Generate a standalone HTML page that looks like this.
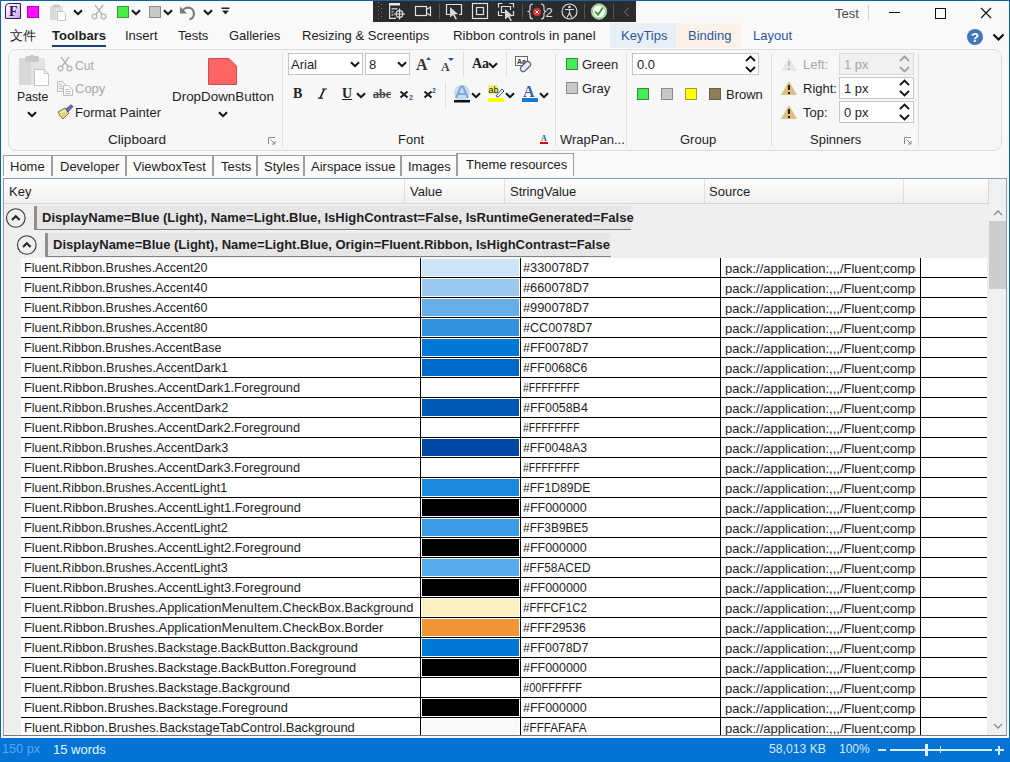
<!DOCTYPE html>
<html><head><meta charset="utf-8">
<style>
*{margin:0;padding:0;box-sizing:border-box}
html,body{width:1010px;height:762px;overflow:hidden;background:#f9f9fa;font-family:"Liberation Sans",sans-serif;font-size:13px;color:#1e1e1e}
.a{position:absolute}
.t{position:absolute;white-space:nowrap;line-height:13px;font-size:13px}
/* window border */
#wl{left:0;top:0;width:1px;height:762px;background:#1b5fa0}
#wr{left:1009px;top:0;width:1px;height:762px;background:#1b5fa0}
#wt{left:0;top:0;width:1010px;height:1px;background:#1b5fa0}
/* debug toolbar */
#dbg{left:373px;top:1px;width:263px;height:21px;background:#2b2b2b}
/* ribbon panel */
#rp{left:8px;top:49px;width:994px;height:102px;border:1px solid #dcdcdc;border-radius:8px;background:#f7f7f7}
.gsep{position:absolute;width:1px;background:#dedede}
.dis{color:#a6a6a6}
.cb{position:absolute;background:#fff;border:1px solid #c6c6c6}
.chev{position:absolute}
/* tabs */
.tab{position:absolute;top:155px;height:23px;border-top:1px solid #a0a0a0;border-right:2px solid #a0a0a0;background:#fafafa}
/* content */
#content{left:3px;top:178px;width:1004px;height:558px;border:1px solid #8c9fb2;border-bottom-color:#7a7a7a;background:#efefef}
#hdr{left:4px;top:179px;width:985px;height:25px;background:linear-gradient(#fdfdfd,#f0f0f0);border-bottom:1px solid #d5d5d5;border-right:1px solid #dadada}
.hsep{position:absolute;top:179px;width:1px;height:24px;background:#dfdfdf}
.row{position:absolute;left:21px;width:966px;height:20px;background:#fff;border-bottom:1px solid #000}
.row .kt{position:absolute;left:3px;top:4px;line-height:13px;white-space:nowrap;font-size:12.7px}
.row .vc{position:absolute;left:399px;top:0;width:101px;height:20px;border-left:1px solid #000;border-right:1px solid #000;padding:1px}
.row .sw{width:97px;height:17px}
.row .st{position:absolute;left:502px;top:4px;line-height:13px;white-space:nowrap;font-size:12px;transform-origin:0 0}
.row .sc{position:absolute;left:699px;top:0;width:1px;height:20px;background:#000}
.row .so{position:absolute;left:704px;top:4px;line-height:13px;white-space:nowrap;width:191px;overflow:hidden;top:3.5px}
.row .sc2{position:absolute;left:899px;top:0;width:1px;height:20px;background:#000}
#sb{left:989px;top:179px;width:17px;height:556px;background:#f0f0f0}
#thumb{left:989px;top:221px;width:17px;height:68px;background:#cdcdcd}
#status{left:0;top:738px;width:1010px;height:24px;background:#0374d6}
</style></head><body>
<div class="a" id="wt"></div><div class="a" id="wl"></div><div class="a" id="wr"></div>
<div class="a" style="left:1px;top:1px;width:1px;height:737px;background:#eaf8ff"></div>
<div class="a" style="left:1px;top:1px;width:1008px;height:1px;background:#eaf8ff"></div>
<div class="a" style="left:1008px;top:1px;width:1px;height:737px;background:#eaf8ff"></div>

<!-- ===== TITLE BAR ===== -->
<div class="a" style="left:5px;top:3px;width:16px;height:16px;border:1.5px solid #3c1466;border-radius:4px 0 0 0;background:linear-gradient(135deg,#fff 10%,#c4a4e4)"></div>
<div class="t" style="left:9px;top:5px;font-family:'Liberation Serif',serif;font-weight:bold;font-size:14px;color:#3a0a6a">F</div>
<div class="a" style="left:27px;top:6px;width:12px;height:12px;background:#ff10ff;border:1px solid #c000c0"></div>
<svg class="a" style="left:49px;top:3px" width="18" height="18" viewBox="0 0 18 18">
 <rect x="1" y="3" width="13" height="14" fill="#e3e3e3"/>
 <rect x="1" y="3" width="6" height="14" fill="#d9d9d9"/>
 <rect x="4" y="1.5" width="7" height="3" rx="1" fill="#c8c8c8"/>
 <path d="M8.5 8.5 H14 L16.5 11 V17.5 H8.5 Z" fill="#fff" stroke="#c4c4c4" stroke-width="1"/>
</svg>
<svg class="a" style="left:73px;top:9px" width="10" height="7" viewBox="0 0 10 7"><path d="M1 1.2 L5 5.2 L9 1.2" fill="none" stroke="#111" stroke-width="2"/></svg>
<svg class="a" style="left:91px;top:4px" width="16" height="16" viewBox="0 0 16 16">
 <path d="M4 1 L11.5 11 M12 1 L4.5 11" stroke="#b4b4b4" stroke-width="1.3" fill="none"/>
 <circle cx="3.5" cy="12.5" r="2.4" fill="none" stroke="#b4b4b4" stroke-width="1.2"/>
 <circle cx="12.5" cy="12.5" r="2.4" fill="none" stroke="#b4b4b4" stroke-width="1.2"/>
</svg>
<div class="a" style="left:117px;top:6px;width:12px;height:12px;background:#44f044;border:1px solid #3a9a3a"></div>
<div class="a" style="left:149px;top:6px;width:12px;height:12px;background:#c8c8c8;border:1px solid #8a8a8a"></div>
<svg class="a" style="left:131px;top:9px" width="10" height="7" viewBox="0 0 10 7"><path d="M1 1.2 L5 5.2 L9 1.2" fill="none" stroke="#111" stroke-width="2"/></svg>
<svg class="a" style="left:163px;top:9px" width="10" height="7" viewBox="0 0 10 7"><path d="M1 1.2 L5 5.2 L9 1.2" fill="none" stroke="#111" stroke-width="2"/></svg>
<svg class="a" style="left:179px;top:3px" width="18" height="18" viewBox="0 0 18 18">
 <path d="M3 10 A6 6 0 1 1 10.5 16.5" fill="none" stroke="#7a7a7a" stroke-width="2.2"/>
 <path d="M1 3.5 V10.5 H8 Z" fill="#7a7a7a"/>
</svg>
<svg class="a" style="left:203px;top:9px" width="10" height="7" viewBox="0 0 10 7"><path d="M1 1.2 L5 5.2 L9 1.2" fill="none" stroke="#111" stroke-width="2"/></svg>
<svg class="a" style="left:221px;top:7px" width="9" height="8" viewBox="0 0 9 8"><rect x="0.5" y="0.5" width="8" height="1.5" fill="#222"/><path d="M1 3.5 H8 L4.5 7.5 Z" fill="#222"/></svg>

<div class="a" id="dbg"></div>
<svg class="a" style="left:373px;top:1px" width="263" height="21" viewBox="0 0 263 21">
 <g fill="#777"><rect x="5" y="1" width="1" height="1"/><rect x="8" y="3" width="1" height="1"/><rect x="5" y="5" width="1" height="1"/><rect x="8" y="7" width="1" height="1"/><rect x="5" y="9" width="1" height="1"/><rect x="8" y="11" width="1" height="1"/><rect x="5" y="13" width="1" height="1"/><rect x="8" y="15" width="1" height="1"/><rect x="5" y="17" width="1" height="1"/></g>
 <rect x="16" y="2" width="11" height="2.5" fill="#e8e8e8"/>
 <g fill="none" stroke="#e0e0e0" stroke-width="1.2">
  <path d="M16.6 2 V17.4 H23"/><path d="M18.5 7.8 H24.5 M18.5 10.8 H20.5 M18.5 13.8 H20.5"/>
  <circle cx="26.5" cy="13" r="3.3"/><path d="M26.5 7.5 V18.5 M21 13 H32"/>
  <rect x="42.5" y="5.5" width="11" height="9"/><path d="M53.5 8.5 L57.5 6 V14.5 L53.5 12"/>
 </g>
 <rect x="66" y="3" width="1" height="15" fill="#555"/>
 <g fill="none" stroke="#e0e0e0" stroke-width="1.2">
  <path d="M77 13.5 H73.5 V3.5 H88.5 V13.5 H86"/>
  <rect x="99.5" y="2.5" width="15" height="15"/><rect x="103.5" y="6.5" width="7" height="7"/>
  <path d="M125.5 6.5 V2.5 H129.5 M136.5 2.5 H140.5 V6.5 M140.5 10 V14.5 H138 M125.5 10 V14.5 H129.5"/><path d="M132 11.5 H128.5 V5.5 H137.5 V9"/>
 </g>
 <path d="M77 6 L85 13 L81.5 13.5 L84 18 L82.5 18.5 L80 14 L77 16.5Z" fill="#d8d8d8"/>
 <path d="M132 8 L140 15 L136.5 15.5 L139 19.5 L137.5 20 L135 16 L132 18.5Z" fill="#d8d8d8"/>
 <rect x="149" y="3" width="1" height="15" fill="#555"/>
 <path d="M160 3 Q157 3 157 6 V8.5 Q157 10 155.5 10.5 Q157 11 157 12.5 V15 Q157 18 160 18 M168 3 Q171 3 171 6 V8.5 Q171 10 172.5 10.5 Q171 11 171 12.5 V15 Q171 18 168 18" fill="none" stroke="#e0e0e0" stroke-width="1.1"/>
 <circle cx="164" cy="11" r="4" fill="#e03030"/><path d="M162.3 9.3 L165.7 12.7 M165.7 9.3 L162.3 12.7" stroke="#fff" stroke-width="1"/>
 <text x="172.5" y="15.5" font-family="Liberation Sans" font-size="13" fill="#e0e0e0">2</text>
 <circle cx="196.5" cy="10.5" r="7.5" fill="none" stroke="#e0e0e0" stroke-width="1.1"/>
 <circle cx="196.5" cy="6" r="1.3" fill="#e0e0e0"/>
 <path d="M192 8.5 H201 M196.5 8.5 V12 L194 16.5 M196.5 12 L199 16.5" fill="none" stroke="#e0e0e0" stroke-width="1.1"/>
 <rect x="211" y="3" width="1" height="15" fill="#555"/>
 <circle cx="226" cy="10.5" r="7.8" fill="#ffffff" stroke="#7ab87a" stroke-width="1"/>
 <circle cx="226" cy="10.5" r="6.5" fill="none" stroke="#2e9a2e" stroke-width="0.6"/>
 <path d="M222 10.5 L225 13.8 L230 6.5" fill="none" stroke="#22a022" stroke-width="1.8"/>
 <rect x="240" y="3" width="1" height="15" fill="#555"/>
 <path d="M256 6.5 L251.5 11 L256 15.5" fill="none" stroke="#777" stroke-width="1"/>
</svg>

<div class="t" style="left:835px;top:7px;color:#4a4a4a">Test</div>
<div class="a" style="left:868px;top:5px;width:1px;height:15px;background:#d0d0d0"></div>
<div class="a" style="left:889px;top:12px;width:11px;height:1px;background:#111"></div>
<div class="a" style="left:935px;top:8px;width:11px;height:11px;border:1px solid #111"></div>
<svg class="a" style="left:980px;top:7px" width="12" height="12" viewBox="0 0 12 12"><path d="M1 1 L11 11 M11 1 L1 11" stroke="#111" stroke-width="1.1"/></svg>
<svg class="a" style="left:992px;top:33px" width="13" height="8" viewBox="0 0 13 8"><path d="M1.5 1.5 L6.5 6.5 L11.5 1.5" fill="none" stroke="#111" stroke-width="2.2"/></svg>

<!-- ===== RIBBON TABS ===== -->
<div class="a" style="left:610px;top:23px;width:66px;height:25px;background:#e8eff7"></div>
<div class="a" style="left:676px;top:23px;width:65px;height:25px;background:#fbf3e9"></div>
<div class="t" style="left:10px;top:29px">文件</div>
<div class="t" style="left:52px;top:29px;font-weight:bold">Toolbars</div>
<div class="a" style="left:52px;top:45px;width:54px;height:2px;background:#1e3f7a"></div>
<div class="t" style="left:125px;top:29px">Insert</div>
<div class="t" style="left:178px;top:29px">Tests</div>
<div class="t" style="left:229px;top:29px">Galleries</div>
<div class="t" style="left:302px;top:29px">Resizing &amp; Screentips</div>
<div class="t" style="left:453px;top:29px;font-size:13.3px">Ribbon controls in panel</div>
<div class="t" style="left:621px;top:29px;color:#2b579a">KeyTips</div>
<div class="t" style="left:688px;top:29px;color:#2b579a">Binding</div>
<div class="t" style="left:753px;top:29px;color:#2b579a">Layout</div>
<div class="a" style="left:967px;top:29px;width:16px;height:16px;border-radius:50%;background:#3f78b8"></div>
<div class="t" style="left:971px;top:31px;color:#fff;font-weight:bold;font-size:13px">?</div>

<!-- ===== RIBBON PANEL ===== -->
<div class="a" id="rp"></div>

<!-- Clipboard -->
<svg class="a" style="left:17px;top:54px" width="34" height="34" viewBox="0 0 34 34">
 <rect x="2" y="4" width="26" height="27" fill="#e3e3e3"/>
 <rect x="2" y="4" width="12" height="27" fill="#d9d9d9"/>
 <rect x="8" y="2" width="14" height="6" rx="1.5" fill="#c8c8c8"/>
 <circle cx="15" cy="2.5" r="2" fill="#c8c8c8"/>
 <path d="M17.5 15.5 H27.5 L31.5 19.5 V31.5 H17.5 Z" fill="#fff" stroke="#c4c4c4" stroke-width="1"/>
 <path d="M27.5 15.5 V19.5 H31.5" fill="none" stroke="#c4c4c4" stroke-width="1"/>
</svg>
<div class="t" style="left:17px;top:91px;font-size:12.2px">Paste</div>
<svg class="a" style="left:27px;top:111px" width="10" height="7" viewBox="0 0 10 7"><path d="M1 1.2 L5 5.2 L9 1.2" fill="none" stroke="#111" stroke-width="2"/></svg>

<svg class="a" style="left:57px;top:56px" width="16" height="16" viewBox="0 0 16 16">
 <path d="M4 1 L11.5 11 M12 1 L4.5 11" stroke="#b4b4b4" stroke-width="1.3" fill="none"/>
 <circle cx="3.5" cy="12.5" r="2.4" fill="none" stroke="#b4b4b4" stroke-width="1.2"/>
 <circle cx="12.5" cy="12.5" r="2.4" fill="none" stroke="#b4b4b4" stroke-width="1.2"/>
</svg>
<div class="t dis" style="left:75px;top:60px;font-size:12.2px">Cut</div>
<svg class="a" style="left:57px;top:81px" width="16" height="15" viewBox="0 0 16 15">
 <path d="M0.5 0.5 H5.5 L8.5 3.5 V10.5 H0.5 Z" fill="#f2f2f2" stroke="#bdbdbd"/>
 <path d="M6.5 4.5 H11.5 L15.5 8.5 V14.5 H6.5 Z" fill="#fafafa" stroke="#bdbdbd"/>
 <path d="M2 3.5 H5 M2 5.5 H6 M2 7.5 H6 M8 8.5 H13 M8 10.5 H14 M8 12.5 H14" stroke="#c4c4c4"/>
</svg>
<div class="t dis" style="left:75px;top:82px">Copy</div>
<svg class="a" style="left:57px;top:104px" width="17" height="16" viewBox="0 0 17 16">
 <path d="M1 8 L8 4 L12 9 L6 15 Q3 13 1 8 Z" fill="#e6d27a" stroke="#6b5a20" stroke-width="0.8"/>
 <path d="M3 9 L9 6" stroke="#f7ecb0" stroke-width="1.5"/>
 <path d="M9 5 L14 0.8 L16 2.5 L11 8 Z" fill="#6a6fc0" stroke="#3a3f80" stroke-width="0.8"/>
</svg>
<div class="t" style="left:75px;top:106px">Format Painter</div>
<div class="t" style="left:108px;top:133px;font-size:13.6px">Clipboard</div>

<svg class="a" style="left:208px;top:58px" width="29" height="27" viewBox="0 0 29 27">
 <path d="M0.5 0.5 H21 L28.5 8 V26.5 H0.5 Z" fill="#ff6464" stroke="#c85050" stroke-width="1"/>
</svg>
<div class="t" style="left:172px;top:90px;font-size:13.4px">DropDownButton</div>
<svg class="a" style="left:218px;top:111px" width="10" height="7" viewBox="0 0 10 7"><path d="M1 1.2 L5 5.2 L9 1.2" fill="none" stroke="#111" stroke-width="2"/></svg>
<svg class="a" style="left:268px;top:137px" width="8" height="8" viewBox="0 0 8 8"><path d="M0.5 7 V0.5 H7 M2.5 2.5 L7 7 M7 4 V7 H4" fill="none" stroke="#8a8a8a" stroke-width="1"/></svg>
<div class="gsep" style="left:282px;top:54px;height:92px"></div>

<!-- Font -->
<div class="cb" style="left:288px;top:53px;width:75px;height:22px"></div>
<div class="t" style="left:291px;top:58px">Arial</div>
<svg class="a" style="left:350px;top:61px" width="10" height="7" viewBox="0 0 10 7"><path d="M1 1.2 L5 5.2 L9 1.2" fill="none" stroke="#111" stroke-width="2"/></svg>
<div class="cb" style="left:365px;top:53px;width:45px;height:22px"></div>
<div class="t" style="left:369px;top:58px">8</div>
<svg class="a" style="left:397px;top:61px" width="10" height="7" viewBox="0 0 10 7"><path d="M1 1.2 L5 5.2 L9 1.2" fill="none" stroke="#111" stroke-width="2"/></svg>

<div class="t" style="left:416px;top:57px;font-family:'Liberation Serif',serif;font-weight:bold;font-size:16px;line-height:16px;color:#333">A</div>
<svg class="a" style="left:426px;top:56.5px" width="5" height="3"><path d="M0 3 L2.5 0 L5 3Z" fill="#2b579a"/></svg>
<div class="t" style="left:441px;top:61px;font-family:'Liberation Serif',serif;font-weight:bold;font-size:12px;line-height:12px;color:#444">A</div>
<svg class="a" style="left:447.5px;top:58px" width="6" height="3"><path d="M0 0 L3 3 L6 0Z" fill="#2b579a"/></svg>
<div class="gsep" style="left:463px;top:52px;height:25px"></div>
<div class="t" style="left:472px;top:57px;font-family:'Liberation Serif',serif;font-weight:bold;font-size:14px;line-height:14px;color:#222">Aa</div>
<svg class="a" style="left:488px;top:62px" width="10" height="7" viewBox="0 0 10 7"><path d="M1 1.2 L5 5.2 L9 1.2" fill="none" stroke="#111" stroke-width="2"/></svg>
<div class="gsep" style="left:506px;top:52px;height:25px"></div>
<svg class="a" style="left:514px;top:55px" width="18" height="18" viewBox="0 0 18 18">
 <rect x="1.5" y="1.5" width="12" height="9" fill="#fff" stroke="#666" stroke-width="1"/>
 <text x="3" y="8.8" font-family="Liberation Sans" font-weight="bold" font-size="7" fill="#333">Aa</text>
 <path d="M7 12 L12 7 Q14 5.5 16 7.5 Q17.5 9.5 16 11 L11 16 Q9 17.5 7.5 16 Q5.5 14 7 12Z" fill="#e6ecf4" stroke="#4a5a78" stroke-width="1.1"/>
</svg>

<div class="t" style="left:293px;top:87px;font-family:'Liberation Serif',serif;font-weight:bold;font-size:14px;line-height:14px;color:#222">B</div>
<svg class="a" style="left:316px;top:87px" width="13" height="13" viewBox="0 0 13 13"><path d="M8.3 2.2 L4.2 11" stroke="#222" stroke-width="1.6"/><path d="M6 2 H11 M2 11.2 H7" stroke="#222" stroke-width="1.2"/></svg>
<div class="t" style="left:342px;top:87px;font-family:'Liberation Serif',serif;font-weight:bold;font-size:14px;line-height:14px;color:#222;text-decoration:underline">U</div>
<svg class="a" style="left:356px;top:92px" width="10" height="7" viewBox="0 0 10 7"><path d="M1 1.2 L5 5.2 L9 1.2" fill="none" stroke="#111" stroke-width="2"/></svg>
<div class="t" style="left:373px;top:88px;font-family:'Liberation Serif',serif;font-weight:bold;font-size:12px;line-height:12px;color:#444;text-decoration:line-through">abc</div>
<svg class="a" style="left:399px;top:90px" width="10" height="9" viewBox="0 0 10 9"><path d="M1.5 1.5 L8.5 7.5 M8.5 1.5 L1.5 7.5" stroke="#222" stroke-width="2.2"/></svg>
<div class="t" style="left:409px;top:94px;font-weight:bold;font-size:7px;line-height:7px;color:#2b579a">2</div>
<svg class="a" style="left:423px;top:90px" width="10" height="9" viewBox="0 0 10 9"><path d="M1.5 1.5 L8.5 7.5 M8.5 1.5 L1.5 7.5" stroke="#222" stroke-width="2.2"/></svg>
<div class="t" style="left:432px;top:87px;font-weight:bold;font-size:7px;line-height:7px;color:#2b579a">2</div>
<div class="gsep" style="left:445px;top:82px;height:26px"></div>
<svg class="a" style="left:453px;top:85px" width="18" height="18" viewBox="0 0 18 18">
 <circle cx="9" cy="8" r="8" fill="#bcd6f0" opacity="0.8"/>
 <path d="M3 13 L8 1.5 H10 L15 13 M5.2 9 H12.8" fill="none" stroke="#7aa7d8" stroke-width="2"/>
 <rect x="1" y="15" width="16" height="2.5" fill="#111"/>
</svg>
<svg class="a" style="left:471px;top:92px" width="10" height="7" viewBox="0 0 10 7"><path d="M1 1.2 L5 5.2 L9 1.2" fill="none" stroke="#111" stroke-width="2"/></svg>
<svg class="a" style="left:488px;top:85px" width="17" height="18" viewBox="0 0 17 18">
 <rect x="0" y="0" width="10" height="9" fill="#f0f070"/>
 <text x="0.5" y="8" font-family="Liberation Sans" font-size="9" fill="#222">ab</text>
 <path d="M8 11 L14 4 L16 6 L10 12 Z" fill="#fff" stroke="#2b579a" stroke-width="1"/>
 <rect x="0" y="13" width="16" height="4" fill="#ffff00"/>
</svg>
<svg class="a" style="left:505px;top:92px" width="10" height="7" viewBox="0 0 10 7"><path d="M1 1.2 L5 5.2 L9 1.2" fill="none" stroke="#111" stroke-width="2"/></svg>
<div class="t" style="left:523px;top:84px;font-family:'Liberation Serif',serif;font-weight:bold;font-size:16px;line-height:16px;color:#3a5fa8">A</div>
<div class="a" style="left:522px;top:98px;width:16px;height:4px;background:#1976d2"></div>
<svg class="a" style="left:539px;top:92px" width="10" height="7" viewBox="0 0 10 7"><path d="M1 1.2 L5 5.2 L9 1.2" fill="none" stroke="#111" stroke-width="2"/></svg>
<div class="t" style="left:398px;top:133px">Font</div>
<div class="t" style="left:541px;top:135px;font-family:'Liberation Serif',serif;font-weight:bold;font-size:8px;line-height:8px;color:#2b579a">A</div>
<div class="a" style="left:540px;top:142px;width:8px;height:2px;background:#e00"></div>
<div class="gsep" style="left:555px;top:54px;height:92px"></div>

<!-- WrapPanel -->
<div class="a" style="left:566px;top:58px;width:12px;height:12px;background:#44ee55;border:1px solid #3a8a3a"></div>
<div class="t" style="left:582px;top:58px">Green</div>
<div class="a" style="left:566px;top:82px;width:12px;height:12px;background:#c8c8c8;border:1px solid #8a8a8a"></div>
<div class="t" style="left:582px;top:82px">Gray</div>
<div class="t" style="left:560px;top:133px">WrapPan...</div>
<div class="gsep" style="left:626px;top:54px;height:92px"></div>

<!-- Group -->
<div class="cb" style="left:632px;top:53px;width:127px;height:22px"></div>
<div class="t" style="left:637px;top:58px">0.0</div>
<svg class="a" style="left:745px;top:55px" width="11" height="18" viewBox="0 0 11 18"><path d="M1 6 L5.5 1.5 L10 6 M1 12 L5.5 16.5 L10 12" fill="none" stroke="#111" stroke-width="1.8"/></svg>
<div class="a" style="left:637px;top:88px;width:12px;height:12px;background:#44ee55;border:1px solid #3a8a3a"></div>
<div class="a" style="left:661px;top:88px;width:12px;height:12px;background:#c8c8c8;border:1px solid #8a8a8a"></div>
<div class="a" style="left:685px;top:88px;width:12px;height:12px;background:#ffff00;border:1px solid #a0a030"></div>
<div class="a" style="left:709px;top:88px;width:12px;height:12px;background:#8c7e5a;border:1px solid #6a6040"></div>
<div class="t" style="left:726px;top:88px">Brown</div>
<div class="t" style="left:680px;top:133px">Group</div>
<div class="gsep" style="left:771px;top:54px;height:92px"></div>

<!-- Spinners -->
<svg class="a" style="left:780px;top:56px" width="18" height="16" viewBox="0 0 18 16"><path d="M9 1 L17 15 H1 Z" fill="#e8e8e8"/><path d="M9 5 V10 M9 12 V14" stroke="#bbb" stroke-width="2"/></svg>
<div class="t dis" style="left:803px;top:58px">Left:</div>
<div class="a" style="left:839px;top:53px;width:75px;height:22px;background:#f0f0f0;border:1px solid #dadada"></div>
<div class="t dis" style="left:844px;top:58px">1 px</div>
<svg class="a" style="left:899px;top:55px" width="11" height="18" viewBox="0 0 11 18"><path d="M1 6 L5.5 1.5 L10 6 M1 12 L5.5 16.5 L10 12" fill="none" stroke="#a0a0a0" stroke-width="1.8"/></svg>

<svg class="a" style="left:780px;top:80px" width="18" height="16" viewBox="0 0 18 16"><path d="M9 1 L17 15 H1 Z" fill="#e0bf80"/><path d="M9 5 V10 M9 12 V14" stroke="#222" stroke-width="2"/></svg>
<div class="t" style="left:803px;top:82px">Right:</div>
<div class="cb" style="left:839px;top:77px;width:75px;height:22px"></div>
<div class="t" style="left:844px;top:82px">1 px</div>
<svg class="a" style="left:899px;top:79px" width="11" height="18" viewBox="0 0 11 18"><path d="M1 6 L5.5 1.5 L10 6 M1 12 L5.5 16.5 L10 12" fill="none" stroke="#111" stroke-width="1.8"/></svg>

<svg class="a" style="left:780px;top:104px" width="18" height="16" viewBox="0 0 18 16"><path d="M9 1 L17 15 H1 Z" fill="#e0bf80"/><path d="M9 5 V10 M9 12 V14" stroke="#222" stroke-width="2"/></svg>
<div class="t" style="left:803px;top:106px">Top:</div>
<div class="cb" style="left:839px;top:101px;width:75px;height:22px"></div>
<div class="t" style="left:844px;top:106px">0 px</div>
<svg class="a" style="left:899px;top:103px" width="11" height="18" viewBox="0 0 11 18"><path d="M1 6 L5.5 1.5 L10 6 M1 12 L5.5 16.5 L10 12" fill="none" stroke="#111" stroke-width="1.8"/></svg>
<div class="t" style="left:810px;top:133px">Spinners</div>
<svg class="a" style="left:904px;top:137px" width="8" height="8" viewBox="0 0 8 8"><path d="M0.5 7 V0.5 H7 M2.5 2.5 L7 7 M7 4 V7 H4" fill="none" stroke="#8a8a8a" stroke-width="1"/></svg>
<div class="gsep" style="left:918px;top:54px;height:92px"></div>

<!-- ===== TAB CONTROL ===== -->
<div class="a" id="content"></div>
<div class="a" style="left:3px;top:155px;width:454px;height:21px;background:#fbfbfb;border-top:1px solid #a0a0a0;border-left:1px solid #a0a0a0"></div>
<div class="a" style="left:51px;top:155px;width:2px;height:21px;background:#a0a0a0"></div>
<div class="a" style="left:125px;top:155px;width:2px;height:21px;background:#a0a0a0"></div>
<div class="a" style="left:212px;top:155px;width:2px;height:21px;background:#a0a0a0"></div>
<div class="a" style="left:256px;top:155px;width:2px;height:21px;background:#a0a0a0"></div>
<div class="a" style="left:303px;top:155px;width:2px;height:21px;background:#a0a0a0"></div>
<div class="a" style="left:400px;top:155px;width:2px;height:21px;background:#a0a0a0"></div>
<div class="a" style="left:456px;top:153px;width:118px;height:23px;background:#fbfbfb;border:1px solid #a0a0a0;border-bottom:none;border-left-width:2px"></div>
<div class="t" style="left:10px;top:160px">Home</div>
<div class="t" style="left:60px;top:160px">Developer</div>
<div class="t" style="left:133px;top:160px">ViewboxTest</div>
<div class="t" style="left:221px;top:160px">Tests</div>
<div class="t" style="left:264px;top:160px">Styles</div>
<div class="t" style="left:311px;top:160px">Airspace issue</div>
<div class="t" style="left:408px;top:160px">Images</div>
<div class="t" style="left:466px;top:158px">Theme resources</div>

<!-- ===== DATA GRID ===== -->
<div class="a" id="hdr"></div>
<div class="hsep" style="left:404px"></div>
<div class="hsep" style="left:504px"></div>
<div class="hsep" style="left:704px"></div>
<div class="hsep" style="left:903px"></div>
<div class="t" style="left:9px;top:185px">Key</div>
<div class="t" style="left:410px;top:185px">Value</div>
<div class="t" style="left:510px;top:185px">StringValue</div>
<div class="t" style="left:709px;top:185px">Source</div>

<!-- groups -->
<svg class="a" style="left:5px;top:208px" width="22" height="22" viewBox="0 0 22 22"><circle cx="10.8" cy="10" r="9.3" fill="none" stroke="#333" stroke-width="1.1"/><path d="M7 12 L10.8 8.2 L14.6 12" fill="none" stroke="#222" stroke-width="2"/></svg>
<div class="a" style="left:34px;top:206px;width:597px;height:24px;background:#e6e6e6;border-left:3px solid #909090;border-bottom:1px solid #808080"></div>
<div class="t" style="left:42px;top:211px;font-weight:bold">DisplayName=Blue (Light), Name=Light.Blue, IsHighContrast=False, IsRuntimeGenerated=False</div>
<svg class="a" style="left:16px;top:235px" width="22" height="22" viewBox="0 0 22 22"><circle cx="10.8" cy="10" r="9.3" fill="none" stroke="#333" stroke-width="1.1"/><path d="M7 12 L10.8 8.2 L14.6 12" fill="none" stroke="#222" stroke-width="2"/></svg>
<div class="a" style="left:45px;top:233px;width:566px;height:24px;background:#e6e6e6;border-left:3px solid #909090;border-bottom:1px solid #808080"></div>
<div class="t" style="left:53px;top:238px;font-weight:bold">DisplayName=Blue (Light), Name=Light.Blue, Origin=Fluent.Ribbon, IsHighContrast=False</div>

<div class="a" style="left:0;top:0;width:1006px;height:735px;overflow:hidden">
<div class="row" style="top:258px"><span class="kt" style="font-size:12.56px;top:4px">Fluent.Ribbon.Brushes.Accent20</span><div class="vc"><div class="sw" style="background:rgb(204,228,247)"></div></div><span class="st" style="transform:scaleX(1.064)">#330078D7</span><div class="sc"></div><span class="so">pack://application:,,,/Fluent;component/Themes</span><div class="sc2"></div></div>
<div class="row" style="top:278px"><span class="kt" style="font-size:12.56px;top:4px">Fluent.Ribbon.Brushes.Accent40</span><div class="vc"><div class="sw" style="background:rgb(153,201,239)"></div></div><span class="st" style="transform:scaleX(1.064)">#660078D7</span><div class="sc"></div><span class="so">pack://application:,,,/Fluent;component/Themes</span><div class="sc2"></div></div>
<div class="row" style="top:298px"><span class="kt" style="font-size:12.56px;top:4px">Fluent.Ribbon.Brushes.Accent60</span><div class="vc"><div class="sw" style="background:rgb(102,174,231)"></div></div><span class="st" style="transform:scaleX(1.064)">#990078D7</span><div class="sc"></div><span class="so">pack://application:,,,/Fluent;component/Themes</span><div class="sc2"></div></div>
<div class="row" style="top:318px"><span class="kt" style="font-size:12.56px;top:4px">Fluent.Ribbon.Brushes.Accent80</span><div class="vc"><div class="sw" style="background:rgb(51,147,223)"></div></div><span class="st" style="transform:scaleX(1.048)">#CC0078D7</span><div class="sc"></div><span class="so">pack://application:,,,/Fluent;component/Themes</span><div class="sc2"></div></div>
<div class="row" style="top:338px"><span class="kt" style="font-size:12.5px;top:4px">Fluent.Ribbon.Brushes.AccentBase</span><div class="vc"><div class="sw" style="background:rgb(0,120,215)"></div></div><span class="st" style="transform:scaleX(1.031)">#FF0078D7</span><div class="sc"></div><span class="so">pack://application:,,,/Fluent;component/Themes</span><div class="sc2"></div></div>
<div class="row" style="top:358px"><span class="kt" style="font-size:12.61px;top:4px">Fluent.Ribbon.Brushes.AccentDark1</span><div class="vc"><div class="sw" style="background:rgb(0,104,198)"></div></div><span class="st" style="transform:scaleX(1.016)">#FF0068C6</span><div class="sc"></div><span class="so">pack://application:,,,/Fluent;component/Themes</span><div class="sc2"></div></div>
<div class="row" style="top:378px"><span class="kt" style="font-size:12.77px;top:3px">Fluent.Ribbon.Brushes.AccentDark1.Foreground</span><div class="vc"><div class="sw" style="background:rgb(255,255,255)"></div></div><span class="st" style="transform:scaleX(0.866)">#FFFFFFFF</span><div class="sc"></div><span class="so">pack://application:,,,/Fluent;component/Themes</span><div class="sc2"></div></div>
<div class="row" style="top:398px"><span class="kt" style="font-size:12.64px;top:4px">Fluent.Ribbon.Brushes.AccentDark2</span><div class="vc"><div class="sw" style="background:rgb(0,88,180)"></div></div><span class="st" style="transform:scaleX(1.033)">#FF0058B4</span><div class="sc"></div><span class="so">pack://application:,,,/Fluent;component/Themes</span><div class="sc2"></div></div>
<div class="row" style="top:418px"><span class="kt" style="font-size:12.77px;top:3px">Fluent.Ribbon.Brushes.AccentDark2.Foreground</span><div class="vc"><div class="sw" style="background:rgb(255,255,255)"></div></div><span class="st" style="transform:scaleX(0.866)">#FFFFFFFF</span><div class="sc"></div><span class="so">pack://application:,,,/Fluent;component/Themes</span><div class="sc2"></div></div>
<div class="row" style="top:438px"><span class="kt" style="font-size:12.64px;top:4px">Fluent.Ribbon.Brushes.AccentDark3</span><div class="vc"><div class="sw" style="background:rgb(0,72,163)"></div></div><span class="st" style="transform:scaleX(1.021)">#FF0048A3</span><div class="sc"></div><span class="so">pack://application:,,,/Fluent;component/Themes</span><div class="sc2"></div></div>
<div class="row" style="top:458px"><span class="kt" style="font-size:12.77px;top:3px">Fluent.Ribbon.Brushes.AccentDark3.Foreground</span><div class="vc"><div class="sw" style="background:rgb(255,255,255)"></div></div><span class="st" style="transform:scaleX(0.866)">#FFFFFFFF</span><div class="sc"></div><span class="so">pack://application:,,,/Fluent;component/Themes</span><div class="sc2"></div></div>
<div class="row" style="top:478px"><span class="kt" style="font-size:12.53px;top:4px">Fluent.Ribbon.Brushes.AccentLight1</span><div class="vc"><div class="sw" style="background:rgb(29,137,222)"></div></div><span class="st" style="transform:scaleX(1.008)">#FF1D89DE</span><div class="sc"></div><span class="so">pack://application:,,,/Fluent;component/Themes</span><div class="sc2"></div></div>
<div class="row" style="top:498px"><span class="kt" style="font-size:12.77px;top:3px">Fluent.Ribbon.Brushes.AccentLight1.Foreground</span><div class="vc"><div class="sw" style="background:rgb(0,0,0)"></div></div><span class="st" style="transform:scaleX(1.038)">#FF000000</span><div class="sc"></div><span class="so">pack://application:,,,/Fluent;component/Themes</span><div class="sc2"></div></div>
<div class="row" style="top:518px"><span class="kt" style="font-size:12.55px;top:4px">Fluent.Ribbon.Brushes.AccentLight2</span><div class="vc"><div class="sw" style="background:rgb(59,155,229)"></div></div><span class="st" style="transform:scaleX(0.998)">#FF3B9BE5</span><div class="sc"></div><span class="so">pack://application:,,,/Fluent;component/Themes</span><div class="sc2"></div></div>
<div class="row" style="top:538px"><span class="kt" style="font-size:12.77px;top:3px">Fluent.Ribbon.Brushes.AccentLight2.Foreground</span><div class="vc"><div class="sw" style="background:rgb(0,0,0)"></div></div><span class="st" style="transform:scaleX(1.038)">#FF000000</span><div class="sc"></div><span class="so">pack://application:,,,/Fluent;component/Themes</span><div class="sc2"></div></div>
<div class="row" style="top:558px"><span class="kt" style="font-size:12.55px;top:4px">Fluent.Ribbon.Brushes.AccentLight3</span><div class="vc"><div class="sw" style="background:rgb(88,172,237)"></div></div><span class="st" style="transform:scaleX(0.992)">#FF58ACED</span><div class="sc"></div><span class="so">pack://application:,,,/Fluent;component/Themes</span><div class="sc2"></div></div>
<div class="row" style="top:578px"><span class="kt" style="font-size:12.77px;top:3px">Fluent.Ribbon.Brushes.AccentLight3.Foreground</span><div class="vc"><div class="sw" style="background:rgb(0,0,0)"></div></div><span class="st" style="transform:scaleX(1.038)">#FF000000</span><div class="sc"></div><span class="so">pack://application:,,,/Fluent;component/Themes</span><div class="sc2"></div></div>
<div class="row" style="top:598px"><span class="kt" style="font-size:12.89px;top:3px">Fluent.Ribbon.Brushes.ApplicationMenuItem.CheckBox.Background</span><div class="vc"><div class="sw" style="background:rgb(252,241,194)"></div></div><span class="st" style="transform:scaleX(0.958)">#FFFCF1C2</span><div class="sc"></div><span class="so">pack://application:,,,/Fluent;component/Themes</span><div class="sc2"></div></div>
<div class="row" style="top:618px"><span class="kt" style="font-size:12.88px;top:3px">Fluent.Ribbon.Brushes.ApplicationMenuItem.CheckBox.Border</span><div class="vc"><div class="sw" style="background:rgb(242,149,54)"></div></div><span class="st" style="transform:scaleX(1.013)">#FFF29536</span><div class="sc"></div><span class="so">pack://application:,,,/Fluent;component/Themes</span><div class="sc2"></div></div>
<div class="row" style="top:638px"><span class="kt" style="font-size:12.79px;top:3px">Fluent.Ribbon.Brushes.Backstage.BackButton.Background</span><div class="vc"><div class="sw" style="background:rgb(0,120,215)"></div></div><span class="st" style="transform:scaleX(1.031)">#FF0078D7</span><div class="sc"></div><span class="so">pack://application:,,,/Fluent;component/Themes</span><div class="sc2"></div></div>
<div class="row" style="top:658px"><span class="kt" style="font-size:12.8px;top:3px">Fluent.Ribbon.Brushes.Backstage.BackButton.Foreground</span><div class="vc"><div class="sw" style="background:rgb(0,0,0)"></div></div><span class="st" style="transform:scaleX(1.038)">#FF000000</span><div class="sc"></div><span class="so">pack://application:,,,/Fluent;component/Themes</span><div class="sc2"></div></div>
<div class="row" style="top:678px"><span class="kt" style="font-size:12.83px;top:3px">Fluent.Ribbon.Brushes.Backstage.Background</span><div class="vc"><div class="sw" style="background:rgb(255,255,255)"></div></div><span class="st" style="transform:scaleX(0.924)">#00FFFFFF</span><div class="sc"></div><span class="so">pack://application:,,,/Fluent;component/Themes</span><div class="sc2"></div></div>
<div class="row" style="top:698px"><span class="kt" style="font-size:12.83px;top:3px">Fluent.Ribbon.Brushes.Backstage.Foreground</span><div class="vc"><div class="sw" style="background:rgb(0,0,0)"></div></div><span class="st" style="transform:scaleX(1.038)">#FF000000</span><div class="sc"></div><span class="so">pack://application:,,,/Fluent;component/Themes</span><div class="sc2"></div></div>
<div class="row" style="top:718px"><span class="kt" style="font-size:12.95px;top:3px">Fluent.Ribbon.Brushes.BackstageTabControl.Background</span><div class="vc"><div class="sw" style="background:rgb(250,250,250)"></div></div><span class="st" style="transform:scaleX(0.973)">#FFFAFAFA</span><div class="sc"></div><span class="so">pack://application:,,,/Fluent;component/Themes</span><div class="sc2"></div></div>
</div>

<div class="a" id="sb"></div>
<div class="a" id="thumb"></div>
<svg class="a" style="left:993px;top:209px" width="10" height="7" viewBox="0 0 10 7"><path d="M1 6 L5 2 L9 6" fill="none" stroke="#8a8a8a" stroke-width="1.3"/></svg>
<svg class="a" style="left:993px;top:723px" width="10" height="7" viewBox="0 0 10 7"><path d="M1 1 L5 5 L9 1" fill="none" stroke="#8a8a8a" stroke-width="1.3"/></svg>

<!-- ===== STATUS ===== -->
<div class="a" id="status"></div>
<div class="t" style="left:2px;top:743px;color:#5aa5e6;font-size:12.7px">150 px</div>
<div class="t" style="left:53px;top:743px;color:#eaf4ff">15 words</div>
<div class="t" style="left:769px;top:743px;color:#d6eaff;font-size:12.2px">58,013 KB</div>
<div class="t" style="left:839px;top:743px;color:#d6eaff;font-size:12px">100%</div>
<div class="a" style="left:878px;top:749px;width:8px;height:2px;background:#d6eaff"></div>
<div class="a" style="left:890px;top:749px;width:102px;height:2px;background:#dcefff"></div>
<div class="a" style="left:925px;top:744px;width:3px;height:12px;background:#e8f0f8"></div>
<div class="a" style="left:940px;top:746px;width:1px;height:7px;background:#d6eaff"></div>
<div class="a" style="left:995px;top:749px;width:9px;height:2px;background:#d6eaff"></div>
<div class="a" style="left:998px;top:746px;width:2px;height:9px;background:#d6eaff"></div>
</body></html>
